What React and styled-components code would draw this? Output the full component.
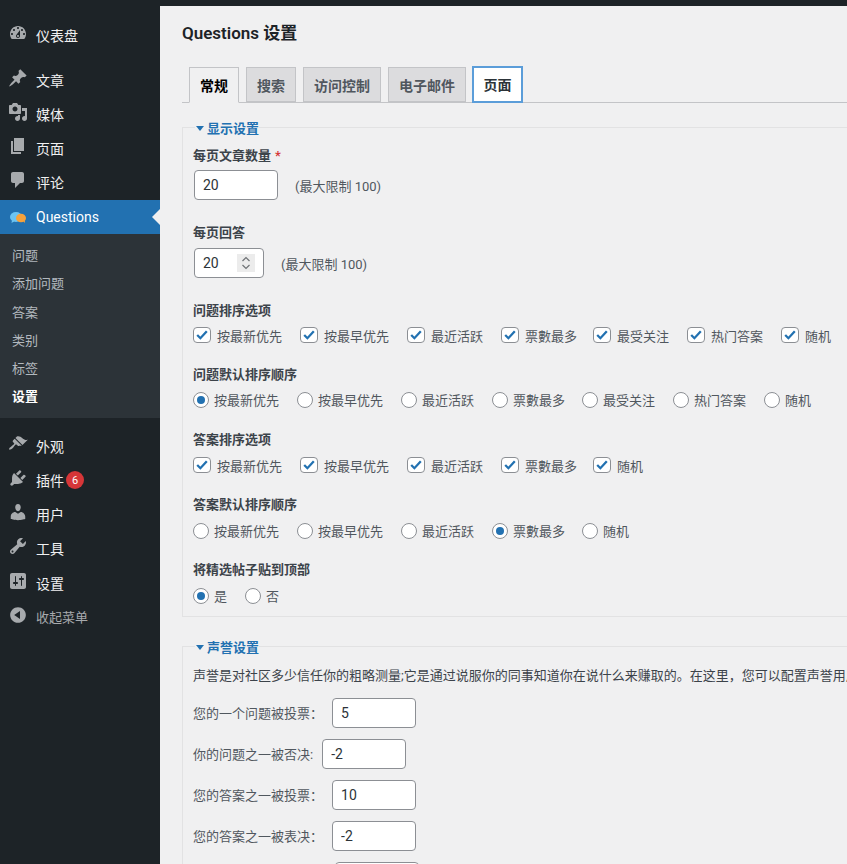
import React from "react";
import styled, { createGlobalStyle } from "styled-components";

const FONT = `Roboto, "Noto Sans CJK SC", sans-serif`;

const Global = createGlobalStyle`
  html, body { margin: 0; padding: 0; height: 864px; overflow: hidden; background: #f0f0f1; }
  body { font-family: ${FONT}; font-size: 13px; color: #3c434a; }
  * { box-sizing: border-box; }
`;

const Page = styled.div`
  width: 847px;
  height: 864px;
  overflow: hidden;
  display: flex;
  flex-direction: column;
`;
const AdminBar = styled.div`
  height: 6px;
  flex: none;
  background: #1d2327;
`;
const Body = styled.div`
  flex: 1;
  display: flex;
  min-height: 0;
`;
const Sidebar = styled.nav`
  width: 160px;
  flex: none;
  background: #1d2327;
  padding-top: 12px;
  display: flex;
  flex-direction: column;
`;
const MenuGroup = styled.div`
  margin-bottom: 11px;
`;
const MenuItem = styled.div`
  position: relative;
  height: 34.2px;
  padding: 0 0 ${(p) => (p.$active ? "0" : "1px")} 8px;
  display: flex;
  align-items: center;
  gap: 8px;
  font-size: ${(p) => (p.$muted ? "13px" : "14px")};
  color: ${(p) => (p.$active ? "#fff" : p.$muted ? "#a7aaad" : "#f0f0f1")};
  background: ${(p) => (p.$active ? "#2271b1" : "transparent")};
  svg { flex: none; margin-bottom: ${(p) => (p.$active ? "0" : "4px")}; }
  ${(p) =>
    p.$active &&
    `&::after {
      content: "";
      position: absolute;
      right: 0;
      top: 9px;
      border: 8px solid transparent;
      border-right-color: #f0f0f1;
      border-left-width: 0;
    }`}
`;
const Badge = styled.span`
  width: 18px;
  height: 18px;
  border-radius: 50%;
  background: #d63638;
  color: #fff;
  font-size: 11px;
  display: inline-flex;
  align-items: center;
  justify-content: center;
  margin-left: -6px;
`;
const Submenu = styled.div`
  background: #2c3338;
  padding: 8px 0 7px;
`;
const SubItem = styled.div`
  height: 28.2px;
  line-height: 28px;
  padding-left: 12px;
  font-size: 13px;
  color: ${(p) => (p.$current ? "#fff" : "rgba(240,246,252,0.7)")};
  font-weight: ${(p) => (p.$current ? 700 : 400)};
`;

const Main = styled.main`
  flex: 1;
  min-width: 0;
  padding-left: 22px;
  overflow: hidden;
`;
const Title = styled.h1`
  margin: 14px 0 0;
  font-size: 17px;
  line-height: 26px;
  font-weight: 600;
  color: #1d2327;
`;
const TabBar = styled.div`
  margin-top: 21px;
  height: 36px;
  padding-left: 7px;
  display: flex;
  gap: 7px;
  border-bottom: 1px solid #c3c4c7;
`;
const Tab = styled.div`
  height: ${(p) => (p.$active ? "36px" : p.$focus ? "37px" : "35px")};
  padding: 0 ${(p) => (p.$focus ? "9.5px" : "10px")};
  margin-left: ${(p) => (p.$focus ? "-1px" : "0")};
  margin-top: ${(p) => (p.$focus ? "-1px" : "0")};
  line-height: 36px;
  font-size: 14px;
  font-weight: 600;
  border: 1px solid #c3c4c7;
  color: ${(p) => (p.$active ? "#000" : p.$focus ? "#2c3338" : "#50575e")};
  background: ${(p) => (p.$focus ? "#fff" : p.$active ? "#f0f0f1" : "#dcdcde")};
  ${(p) => p.$active && "border-bottom-color: #f0f0f1;"}
  ${(p) => p.$focus && "border: 2px solid #5b9dd9; line-height: 35px;"}
`;
const Fieldset = styled.fieldset`
  margin: ${(p) => p.$top} 0 0;
  width: 1000px;
  padding: ${(p) => p.$pad} 0 11px 10px;
  border: 1px solid #e2e2e3;
  min-inline-size: 0;
`;
const Legend = styled.legend`
  margin-left: 2px;
  padding: 3px 0 0;
  height: 18px;
  line-height: 15px;
  font-size: 13px;
  font-weight: 600;
  color: #2271b1;
  display: flex;
  align-items: center;
  gap: 3px;
  &::before {
    content: "";
    margin-left: 1px;
    border: 4px solid transparent;
    border-top: 5px solid #2271b1;
    border-bottom-width: 0;
  }
`;
const FieldLabel = styled.div`
  height: 18px;
  line-height: 18px;
  font-size: 13px;
  font-weight: 600;
  color: #3c434a;
  margin-top: ${(p) => p.$top || "0"};
  margin-bottom: ${(p) => p.$bottom || "8px"};
`;
const Required = styled.span`
  color: #d63638;
  margin-left: 4px;
`;
const InputRow = styled.div`
  display: flex;
  align-items: center;
  margin-left: 1px;
`;
const TextInput = styled.input`
  width: ${(p) => p.$w || "84px"};
  height: 30px;
  padding: 0 8px;
  border: 1px solid #8c8f94;
  border-radius: 4px;
  background: #fff;
  font-family: ${FONT};
  font-size: 14px;
  color: #2c3338;
  outline: none;
`;
const Hint = styled.span`
  margin-left: ${(p) => p.$left};
  color: #50575e;
  font-size: 13px;
`;
const SpinWrap = styled.div`
  position: relative;
  display: inline-flex;
`;
const Spinner = styled.span`
  position: absolute;
  left: 43px;
  top: 6px;
  width: 18px;
  height: 18px;
  background: #ececec;
  display: flex;
  align-items: center;
  justify-content: center;
`;
const OptionRow = styled.div`
  display: flex;
  align-items: center;
  height: 18px;
`;
const Option = styled.label`
  display: flex;
  align-items: center;
  gap: ${(p) => (p.$radio ? "5px" : "6px")};
  margin-right: ${(p) => p.$gap || "18px"};
  padding-top: 2px;
  font-size: 13px;
  line-height: 18px;
  color: #50575e;
  white-space: nowrap;
`;
const Check = styled.span`
  width: 18px;
  height: 16px;
  margin-bottom: 4px;
  border: 1px solid #8c8f94;
  border-radius: 4px;
  background: #fff;
  display: flex;
  align-items: center;
  justify-content: center;
`;
const Radio = styled.span`
  width: 16px;
  height: 16px;
  margin-bottom: 2px;
  border: 1px solid #8c8f94;
  border-radius: 50%;
  background: #fff;
  display: flex;
  align-items: center;
  justify-content: center;
  &::before {
    content: "";
    width: 8px;
    height: 8px;
    border-radius: 50%;
    background: ${(p) => (p.$on ? "#2271b1" : "transparent")};
  }
`;
const Paragraph = styled.p`
  margin: 11px 0 14px;
  height: 18px;
  line-height: 20px;
  font-size: 13px;
  color: #3c434a;
  white-space: nowrap;
`;
const RepRow = styled.div`
  display: flex;
  align-items: center;
  height: 30px;
  margin-bottom: 11px;
  color: #50575e;
`;
const RepLabel = styled.span`
  margin-right: 9px;
  padding-bottom: 1px;
  white-space: pre;
`;

const Icon = ({ d }) => (
  <svg width="20" height="20" viewBox="0 0 20 20" fill="#a7aaad" aria-hidden="true">
    <path d={d} />
  </svg>
);

const ICONS = {
  dashboard:
    "M3.76 16h12.48c1.1-1.37 1.76-3.11 1.76-5 0-4.42-3.58-8-8-8s-8 3.58-8 8c0 1.89.66 3.63 1.76 5zM10 4c.55 0 1 .45 1 1s-.45 1-1 1-1-.45-1-1 .45-1 1-1zM6 6c.55 0 1 .45 1 1s-.45 1-1 1-1-.45-1-1 .45-1 1-1zm8 0c.55 0 1 .45 1 1s-.45 1-1 1-1-.45-1-1 .45-1 1-1zm-5.37 5.55L12 7v6c0 1.1-.9 2-2 2s-2-.9-2-2c0-.57.24-1.08.63-1.45zM4 10c.55 0 1 .45 1 1s-.45 1-1 1-1-.45-1-1 .45-1 1-1zm12 0c.55 0 1 .45 1 1s-.45 1-1 1-1-.45-1-1 .45-1 1-1zm-5 3c0-.55-.45-1-1-1s-1 .45-1 1 .45 1 1 1 1-.45 1-1z",
  post:
    "M10.44 3.02l1.82-1.82 6.36 6.35-1.83 1.82c-1.05-.68-2.48-.57-3.41.36l-.75.75c-.92.93-1.04 2.35-.35 3.41l-1.83 1.82-2.41-2.41-2.8 2.79c-.42.42-3.38 2.71-3.8 2.29s1.86-3.39 2.28-3.81l2.79-2.79L4.1 9.36l1.83-1.82c1.05.69 2.48.57 3.41-.36l.75-.75c.93-.92 1.04-2.35.35-3.41z",
  media:
    "M13 11V4c0-.55-.45-1-1-1h-1.67L9 1H5L3.67 3H2c-.55 0-1 .45-1 1v7c0 .55.45 1 1 1h10c.55 0 1-.45 1-1zM7 4.5c1.38 0 2.5 1.12 2.5 2.5S8.38 9.5 7 9.5 4.5 8.38 4.5 7 5.62 4.5 7 4.5zM14 6h5v10.5c0 1.38-1.12 2.5-2.5 2.5S14 17.88 14 16.5s1.12-2.5 2.5-2.5c.17 0 .34.02.5.05V9h-3V6zm-4 8.05V13h2v3.5c0 1.38-1.12 2.5-2.5 2.5S7 17.88 7 16.5 8.12 14 9.5 14c.17 0 .34.02.5.05z",
  page: "M6 15V2h10v13H6zm-1 1h8v2H3V5h2v11z",
  comment:
    "M5 2h9c1.1 0 2 .9 2 2v7c0 1.1-.9 2-2 2h-2l-5 5v-5H5c-1.1 0-2-.9-2-2V4c0-1.1.9-2 2-2z",
  appearance:
    "M14.48 11.06L7.41 3.99l1.5-1.5c.5-.56 2.3-.47 3.51.32 1.21.8 1.43 1.28 2.91 2.1 1.18.64 2.45 1.26 4.45.85zm-.71.71L6.7 4.7 4.93 6.47c-.39.39-.39 1.02 0 1.41l1.06 1.06c.39.39.39 1.03 0 1.42-.6.6-1.43 1.11-2.21 1.69-.35.26-.7.53-1.01.84C1.43 13.23.78 15.08 1.2 15.5c.43.43 2.27-.22 3.62-1.57.31-.31.58-.66.84-1.01.58-.78 1.09-1.61 1.69-2.21.39-.39 1.02-.39 1.41 0l1.06 1.06c.39.39 1.02.39 1.41 0z",
  plugin:
    "M13.11 4.36L9.87 7.6 8 5.73l3.24-3.24c.35-.34 1.05-.2 1.56.32.52.51.66 1.21.31 1.55zm-8 1.77l.91-1.12 9.01 9.01-1.19.84c-.71.71-2.63 1.16-3.82 1.16H6.14L4.9 17.26c-.59.59-1.54.59-2.12 0-.59-.58-.59-1.53 0-2.12l1.24-1.24v-3.88c0-1.13.4-3.19 1.09-3.89zm7.26 3.97l3.24-3.24c.34-.35 1.04-.21 1.55.31.52.51.66 1.21.31 1.55l-3.24 3.25z",
  users:
    "M10 9.25c-2.27 0-2.73-3.44-2.73-3.44C7 4.02 7.82 2 9.97 2c2.16 0 2.98 2.02 2.71 3.81 0 0-.41 3.44-2.68 3.44zm0 2.57L12.72 10c2.39 0 4.52 2.33 4.52 4.53v2.49s-3.65 1.13-7.24 1.13c-3.65 0-7.24-1.13-7.24-1.13v-2.49c0-2.25 1.94-4.48 4.47-4.48z",
  tools:
    "M16.68 9.77c-1.34 1.34-3.3 1.67-4.95.99l-5.41 6.52c-.99.99-2.59.99-3.58 0s-.99-2.59 0-3.57l6.52-5.42c-.68-1.65-.35-3.61.99-4.95 1.28-1.28 3.12-1.62 4.72-1.06l-2.89 2.89 2.82 2.82 2.86-2.87c.53 1.58.18 3.39-1.08 4.65zM3.81 16.21c.4.39 1.04.39 1.43 0 .4-.4.4-1.04 0-1.43-.39-.4-1.03-.4-1.43 0-.39.39-.39 1.03 0 1.43z",
  settings:
    "M18 16V4c0-1.1-.9-2-2-2H4c-1.1 0-2 .9-2 2v12c0 1.1.9 2 2 2h12c1.1 0 2-.9 2-2zM8 11h1c.55 0 1 .45 1 1s-.45 1-1 1H8v1.5c0 .28-.22.5-.5.5s-.5-.22-.5-.5V13H6c-.55 0-1-.45-1-1s.45-1 1-1h1V5.5c0-.28.22-.5.5-.5s.5.22.5.5V11zm5-2h-1c-.55 0-1-.45-1-1s.45-1 1-1h1V5.5c0-.28.22-.5.5-.5s.5.22.5.5V7h1c.55 0 1 .45 1 1s-.45 1-1 1h-1v5.5c0 .28-.22.5-.5.5s-.5-.22-.5-.5V9z",
  collapse:
    "M10 2.16c4.33 0 7.84 3.51 7.84 7.84s-3.51 7.84-7.84 7.84S2.16 14.33 2.16 10 5.71 2.16 10 2.16zm2 11.72V6.12L6.18 9.97z",
};

const QuestionsLogo = () => (
  <svg width="20" height="20" viewBox="0 0 20 20" aria-hidden="true">
    <ellipse cx="8" cy="10" rx="6" ry="5" fill="#6cc4f2" />
    <path d="M4 13l-.5 3 3-1.700z" fill="#6cc4f2" />
    <ellipse cx="13" cy="11" rx="5" ry="4.300" fill="#f7a23b" />
    <path d="M15 14l2 2-.3-3z" fill="#f7a23b" />
  </svg>
);

const CheckMark = () => (
  <svg width="12" height="10" viewBox="0 0 12 10" aria-hidden="true">
    <path d="M1.200 5l3.200 3.200L10.800 1.300" fill="none" stroke="#2271b1" strokeWidth="2.300" />
  </svg>
);

const Chevrons = () => (
  <svg width="10" height="14" viewBox="0 0 10 14" aria-hidden="true">
    <path d="M1.500 5L5 1.500 8.500 5M1.500 9L5 12.500 8.500 9" fill="none" stroke="#6f7376" strokeWidth="1.200" />
  </svg>
);

const ALL = ["按最新优先", "按最早优先", "最近活跃", "票數最多", "最受关注", "热门答案", "随机"];
const SHORT = ["按最新优先", "按最早优先", "最近活跃", "票數最多", "随机"];
const gapFor = (t) => (t === "票數最多" ? "16px" : "18px");

const CheckRow = ({ items }) => (
  <OptionRow>
    {items.map((t) => (
      <Option key={t} $gap={gapFor(t)}>
        <Check><CheckMark /></Check>
        {t}
      </Option>
    ))}
  </OptionRow>
);
const RadioRow = ({ items, on }) => (
  <OptionRow>
    {items.map((t) => (
      <Option key={t} $radio $gap={t === "票數最多" ? "17px" : "18px"}>
        <Radio $on={t === on} />
        {t}
      </Option>
    ))}
  </OptionRow>
);

const topMenu = [
  ["文章", "post"],
  ["媒体", "media"],
  ["页面", "page"],
  ["评论", "comment"],
];
const bottomMenu = [
  ["外观", "appearance"],
  ["插件", "plugin", 6],
  ["用户", "users"],
  ["工具", "tools"],
  ["设置", "settings"],
];
const subMenu = ["问题", "添加问题", "答案", "类别", "标签"];
const rep = [
  ["您的一个问题被投票：", "5"],
  ["你的问题之一被否决:", "-2"],
  ["您的答案之一被投票：", "10"],
  ["您的答案之一被表决：", "-2"],
  ["您的答案被选为最佳 ：", "15"],
];

export default function App() {
  return (
    <Page>
      <Global />
      <AdminBar />
      <Body>
        <Sidebar>
          <MenuGroup>
            <MenuItem><Icon d={ICONS.dashboard} />仪表盘</MenuItem>
          </MenuGroup>
          {topMenu.map(([t, i]) => (
            <MenuItem key={t}><Icon d={ICONS[i]} />{t}</MenuItem>
          ))}
          <MenuItem $active><QuestionsLogo />Questions</MenuItem>
          <Submenu>
            {subMenu.map((t) => <SubItem key={t}>{t}</SubItem>)}
            <SubItem $current>设置</SubItem>
          </Submenu>
          <MenuGroup />
          {bottomMenu.map(([t, i, n]) => (
            <MenuItem key={t}>
              <Icon d={ICONS[i]} />{t}{n ? <Badge>{n}</Badge> : null}
            </MenuItem>
          ))}
          <MenuItem $muted><Icon d={ICONS.collapse} />收起菜单</MenuItem>
        </Sidebar>
        <Main>
          <Title>Questions 设置</Title>
          <TabBar>
            <Tab $active>常规</Tab>
            <Tab>搜索</Tab>
            <Tab>访问控制</Tab>
            <Tab>电子邮件</Tab>
            <Tab $focus>页面</Tab>
          </TabBar>
          <Fieldset $top="15px" $pad="11px">
            <Legend>显示设置</Legend>
            <FieldLabel $bottom="5px">每页文章数量<Required>*</Required></FieldLabel>
            <InputRow>
              <TextInput defaultValue="20" />
              <Hint $left="17px">(最大限制 100)</Hint>
            </InputRow>
            <FieldLabel $top="24px" $bottom="6px">每页回答</FieldLabel>
            <InputRow>
              <SpinWrap>
                <TextInput $w="70px" defaultValue="20" />
                <Spinner><Chevrons /></Spinner>
              </SpinWrap>
              <Hint $left="17px">(最大限制 100)</Hint>
            </InputRow>
            <FieldLabel $top="24px" $bottom="7px">问题排序选项</FieldLabel>
            <CheckRow items={ALL} />
            <FieldLabel $top="21px" $bottom="7px">问题默认排序顺序</FieldLabel>
            <RadioRow items={ALL} on="按最新优先" />
            <FieldLabel $top="22px">答案排序选项</FieldLabel>
            <CheckRow items={SHORT} />
            <FieldLabel $top="21px">答案默认排序顺序</FieldLabel>
            <RadioRow items={SHORT} on="票數最多" />
            <FieldLabel $top="21px">将精选帖子贴到顶部</FieldLabel>
            <RadioRow items={["是", "否"]} on="是" />
          </Fieldset>
          <Fieldset $top="20px" $pad="0">
            <Legend>声誉设置</Legend>
            <Paragraph>声誉是对社区多少信任你的粗略测量;它是通过说服你的同事知道你在说什么来赚取的。在这里，您可以配置声誉用户的积分规则。</Paragraph>
            {rep.map(([t, v]) => (
              <RepRow key={t}>
                <RepLabel>{t}</RepLabel>
                <TextInput defaultValue={v} />
              </RepRow>
            ))}
          </Fieldset>
        </Main>
      </Body>
    </Page>
  );
}
